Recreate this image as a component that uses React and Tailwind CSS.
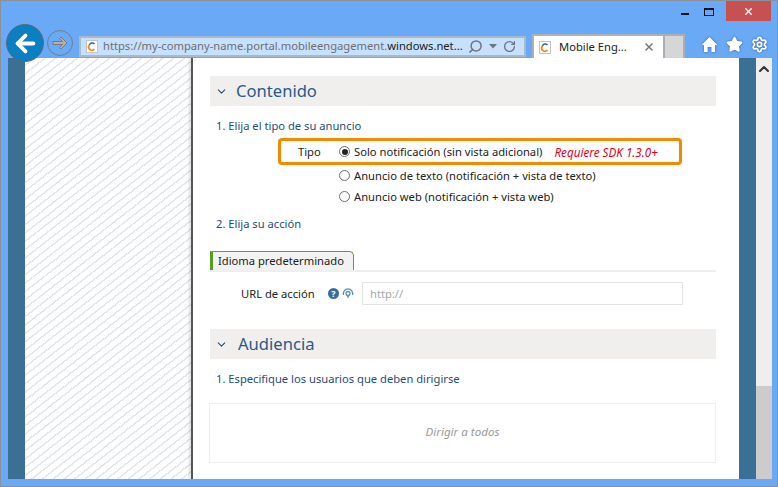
import { ArrowLeft, ChevronDown, ChevronUp, RotateCw, Search, Settings, Star, X } from 'lucide-react';

const FONT = "font-['Noto_Sans','Open_Sans',sans-serif]";

const Favicon = () => (
    <svg width="12" height="13" viewBox="0 0 12 13" className="shrink-0">
        <rect x="0.5" y="0.5" width="11" height="12" fill="#fff" stroke="#c4c4c4" />
        <path d="M8.500 4 A3 3 0 0 0 3.400 5" fill="none" stroke="#1f6fb0" strokeWidth="1.5" />
        <path d="M3.400 5 A3 3 0 0 0 8.500 9" fill="none" stroke="#ee8a12" strokeWidth="1.7" />
    </svg>
);

const Radio = ({ checked }) => (
    <span className="flex h-[11px] w-[11px] shrink-0 items-center justify-center rounded-full border border-[#6f6f6f] bg-white">
        {checked && <span className="h-[6px] w-[6px] rounded-full bg-[#222]" />}
    </span>
);

const SectionHeader = ({ title, gap }) => (
    <div className={`flex h-[30px] items-center bg-[#f0efee] pl-[5px] ${gap}`}>
        <ChevronDown size={13} strokeWidth={2} className="text-[#1f4e79]" />
        <h2 className="text-[16.6px] leading-none text-[#2b5a85]">{title}</h2>
    </div>
);

const App = () => {
    return (
        <div className={`${FONT} flex h-[487px] w-[778px] flex-col overflow-hidden border border-[#8a9199] bg-[#69a9f5]`}>
            {/* window chrome */}
            <div className="relative z-10 flex h-[57px] shrink-0 flex-col">
                <div className="flex h-[20px] items-start justify-end pr-[6px]">
                    <div className="mt-[12px] mr-[15px] h-[2px] w-[8px] bg-[#111]" />
                    <div className="mt-[7px] mr-[12px] h-[8px] w-[10px] border border-t-2 border-[#111]" />
                    <div className="flex h-[20px] w-[45px] items-center justify-center bg-[#c75050]">
                        <X size={11} strokeWidth={3} className="text-white" />
                    </div>
                </div>
                <div className="flex h-[37px] items-start pl-[5px]">
                    <button type="button" className="mt-[3px] flex h-[38px] w-[38px] shrink-0 items-center justify-center rounded-full border border-[#5a6a78] bg-[#0a7fc2]">
                        <ArrowLeft size={27} strokeWidth={3.4} className="text-white" />
                    </button>
                    <button type="button" className="mt-[9px] ml-[3px] flex h-[26px] w-[26px] shrink-0 items-center justify-center rounded-full border border-[#6f7f8f]">
                        <svg width="16" height="14" viewBox="0 0 16 14">
                            <path d="M9 1l6 6-6 6-1.500-1.500L10.500 8.500H1v-3h9.500L7.500 2.500z" fill="#b4b0aa" stroke="#6f6f6f" strokeWidth="0.8" />
                        </svg>
                    </button>
                    <div className="mt-[15px] ml-[6px] flex h-[21px] w-[447px] items-center border-2 border-[#a9b9cc] bg-[#c6e0fd] pl-[5px] text-[11.2px] whitespace-nowrap">
                        <Favicon />
                        <span className="ml-[5px] flex-1 text-[#6d6f72]">https://my-company-name.portal.mobileengagement.<span className="text-[#222]">windows.net...</span></span>
                        <Search size={15} strokeWidth={2.4} className="-scale-x-100 text-[#6c7680]" />
                        <svg width="8" height="5" viewBox="0 0 8 5" className="mx-[6px]"><path d="M0 0h8L4 4.500z" fill="#6c7680" /></svg>
                        <RotateCw size={13} strokeWidth={2.4} className="mr-[8px] text-[#6c7680]" />
                    </div>
                    <div className="mt-[13px] ml-[6px] flex h-[24px] w-[131px] items-center border-2 border-r-0 border-b-0 border-[#a9b0b8] bg-white pl-[5px] text-[11.2px] text-[#222]">
                        <Favicon />
                        <span className="ml-[8px] w-[84px] whitespace-nowrap">Mobile Eng...</span>
                        <X size={12} strokeWidth={3} className="text-[#777]" />
                    </div>
                    <div className="mt-[13px] h-[24px] w-[22px] border-2 border-b-0 border-[#a9b0b8] bg-[#d6d6d6]" />
                    <div className="mt-[15px] ml-[16px] flex items-center gap-[8px] text-white drop-shadow-[0_0_1px_rgba(40,60,90,0.7)]">
                        <svg width="17" height="17" viewBox="0 0 17 17" fill="#fff">
                            <path d="M8.500 1 16 8.400l-1 1.100-1-1V16h-3.600v-5H6.600v5H3V8.500l-1 1-1-1.100z" />
                        </svg>
                        <Star size={17} fill="#fff" />
                        <Settings size={17} strokeWidth={2.4} />
                    </div>
                </div>
            </div>

            {/* page area */}
            <div className="ml-[7px] mr-[5px] flex h-[421px] shrink-0">
                <div className="w-[17px] shrink-0 bg-[#3b6f94]" />
                <div className="w-[168px] shrink-0 border-r-2 border-[#555] bg-[repeating-linear-gradient(142deg,#ffffff_0px,#ffffff_5.200px,#e3e5ed_5.200px,#e3e5ed_6.600px)] shadow-[inset_-4px_0_3px_-2px_rgba(0,0,0,0.12)]" />
                <main className="flex w-[546px] shrink-0 flex-col bg-white pt-[18px] pr-[23px] pl-[17px] text-[11.2px] leading-[18px] text-[#222]">
                    <SectionHeader title="Contenido" gap="gap-[8px]" />
                    <p className="mt-[11px] ml-[6px] text-[#1f4e79]">1. Elija el tipo de su anuncio</p>
                    <div className="mt-[3px] ml-[68px] flex h-[27px] w-[404px] items-center rounded-[4px] border-[3px] border-[#f28a00]">
                        <span className="ml-[17px] w-[41px]">Tipo</span>
                        <Radio checked />
                        <span className="ml-[4px]">Solo notificación (sin vista adicional)</span>
                        <span className="ml-[12px] text-[11.7px] text-[#e0001b] italic">Requiere SDK 1.3.0+</span>
                    </div>
                    <div className="mt-[2px] ml-[129px] flex flex-col gap-[4px]">
                        <label className="flex h-[17px] items-center gap-[4px]"><Radio />Anuncio de texto (notificación + vista de texto)</label>
                        <label className="flex h-[17px] items-center gap-[4px]"><Radio />Anuncio web (notificación + vista web)</label>
                    </div>
                    <p className="mt-[10px] ml-[6px] text-[#1f4e79]">2. Elija su acción</p>
                    <div className="mt-[18px] border-b-2 border-[#eeeeee]">
                        <span className="flex h-[19px] w-[144px] items-center rounded-tr-[5px] border-t border-r border-l-[3px] border-[#7c8a55] border-l-[#5a9a1f] bg-[#f2f2f0] pl-[5px] text-[#222]">Idioma predeterminado</span>
                    </div>
                    <div className="mt-[10px] flex items-center">
                        <span className="ml-[31px] w-[87px]">URL de acción</span>
                        <span className="flex h-[11px] w-[11px] items-center justify-center rounded-full bg-[#3a6d9a] text-[9px] font-bold text-white">?</span>
                        <svg width="12" height="12" viewBox="0 0 12 12" className="ml-[3px]" fill="none">
                            <path d="M1.500 7A4.700 4.700 0 1 1 10.500 7" stroke="#5c8fb0" strokeWidth="1.300" />
                            <circle cx="6" cy="5.500" r="2" stroke="#5c8fb0" strokeWidth="1.300" />
                            <path d="M4.800 7.500h2.400L6 11z" fill="#5c8fb0" />
                        </svg>
                        <div className="ml-[8px] flex h-[23px] w-[321px] items-center border border-[#e3e3e3] pl-[7px] text-[#a8a8a8]">http://</div>
                    </div>
                    <div className="mt-[24px]"><SectionHeader title="Audiencia" gap="gap-[10px]" /></div>
                    <p className="mt-[11px] ml-[6px] text-[#1f4e79]">1. Especifique los usuarios que deben dirigirse</p>
                    <div className="mt-[15px] -ml-px flex h-[60px] w-[507px] items-center justify-center border border-[#eeeeee] pb-[2px] text-[11.6px] text-[#9a9a9a] italic">Dirigir a todos</div>
                </main>
                <div className="w-[17px] shrink-0 bg-[#3b6f94]" />
                <div className="flex w-[16px] shrink-0 flex-col">
                    <div className="flex h-[328px] justify-center bg-[#eeeeee] pt-[3px]">
                        <ChevronUp size={16} strokeWidth={3} className="text-[#333]" />
                    </div>
                    <div className="flex-1 bg-[#cccccc]" />
                </div>
            </div>
        </div>
    );
};

export default App;
